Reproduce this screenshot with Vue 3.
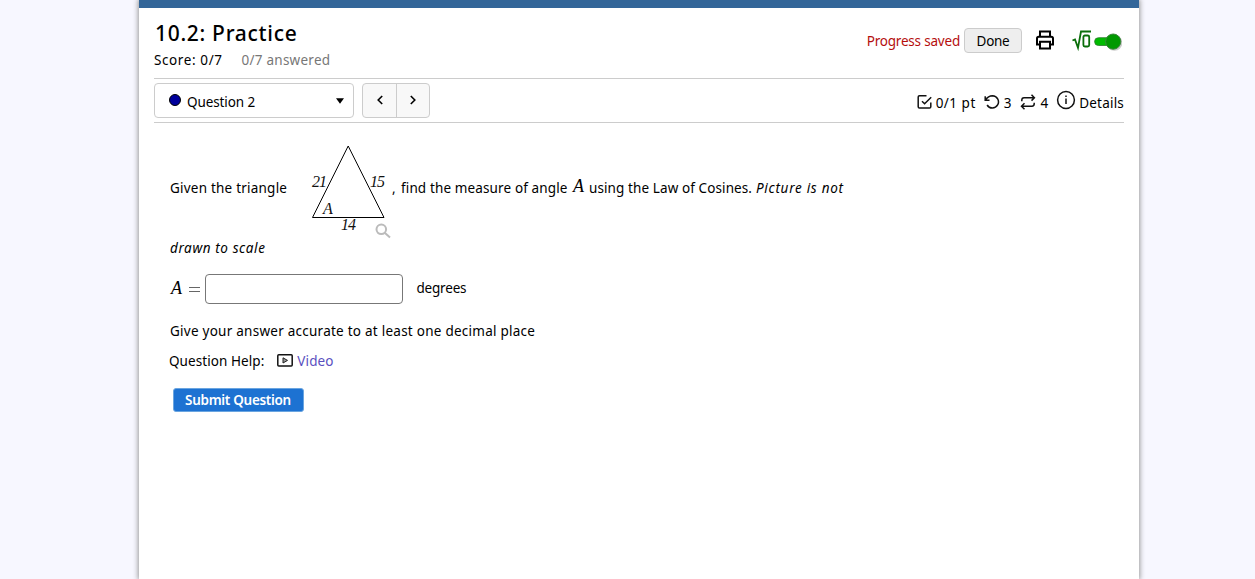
<template>
  <div class="page">
    <div class="container">
      <div class="topbar"></div>
      <header class="header">
        <div class="heading">
          <h1>10.2: Practice</h1>
          <div class="scores">
            <span class="score">Score: 0/7</span>
            <span class="answered">0/7 answered</span>
          </div>
        </div>
        <div class="tools">
          <span class="saved">Progress saved</span>
          <button class="done" type="button"><span>Done</span></button>
          <svg class="printer" width="20" height="20" viewBox="0 0 20 20">
            <path d="M5 6.5V1.5H15V6.5M5 14.5H2V8.5Q2 6.8 3.8 6.8H16.2Q18 6.8 18 8.5V14.5H15M5 11.8H15V18.5H5Z" />
          </svg>
          <button class="math-toggle" type="button" @click="mathOn = !mathOn">
            <svg width="50" height="24" viewBox="0 0 50 24">
              <path class="root" d="M0.5 11.5L3 10.5L6 18.8L9 2.5H19" />
              <rect class="root" x="11.4" y="6.5" width="5.8" height="11" rx="1.5" />
              <rect class="track" x="22.6" y="8.7" width="22" height="7.8" rx="3.9" />
              <circle class="shade" cx="42.4" cy="13.8" r="8" />
              <circle class="knob" :cx="mathOn ? 41.2 : 30" cy="12.6" r="7.6" />
            </svg>
          </button>
        </div>
      </header>

      <nav class="question-nav">
        <button class="picker" type="button">
          <i class="dot"></i>
          <span class="picker-label">Question 2</span>
          <svg width="8" height="6" viewBox="0 0 8 6"><path d="M0 0.3H8L4 5.7Z" /></svg>
        </button>
        <div class="arrows">
          <button type="button" aria-label="Previous">
            <svg width="8" height="10" viewBox="0 0 8 10"><path d="M6.2 1L2.2 5L6.2 9" /></svg>
          </button>
          <button type="button" aria-label="Next">
            <svg width="8" height="10" viewBox="0 0 8 10"><path d="M1.8 1L5.8 5L1.8 9" /></svg>
          </button>
        </div>
        <div class="details">
          <svg class="check" width="16" height="16" viewBox="0 0 16 16">
            <path d="M9.5 1.8H2.5Q1.2 1.8 1.2 3.1V12.8Q1.2 14.1 2.5 14.1H12.5Q13.8 14.1 13.8 12.8V8.5M5 7.3L7.6 9.8L14.2 3.2" />
          </svg>
          <span class="points">0/1 pt</span>
          <svg class="retry" width="16" height="16" viewBox="0 0 16 16">
            <path d="M1.2 2.2V6.3H5.5M1.5 6.1Q4.2 1.8 8.5 1.8A6.1 6.1 0 1 1 3.1 11" />
          </svg>
          <span class="tries">3</span>
          <svg class="repeat" width="16" height="16" viewBox="0 0 16 16">
            <path d="M11.5 0.8L14.4 3.8L11.5 6.6M14.2 3.8H4Q1.8 3.8 1.8 6.5V7.2M4.5 9.2L1.5 12.2L4.5 15.2M1.7 12.2H12Q14.2 12.2 14.2 9.8V8.8" />
          </svg>
          <span class="versions">4</span>
          <svg class="info" width="20" height="20" viewBox="0 0 20 20">
            <circle cx="10" cy="10" r="8.4" />
            <path d="M10 8.6V14M10 5.6V7" />
          </svg>
          <span class="details-label">Details</span>
        </div>
      </nav>

      <main class="question">
        <div class="prompt">
          <span class="given">Given the triangle</span>
          <div class="figure">
            <svg width="90" height="100" viewBox="0 0 90 100">
              <path class="triangle" d="M8.5 77.5H80L44.2 6Z" />
              <text x="8" y="47" textLength="15">21</text>
              <text x="66" y="47" textLength="15">15</text>
              <text x="19" y="74">A</text>
              <text x="37" y="90" textLength="15">14</text>
              <circle class="lens" cx="77.3" cy="89.3" r="4.8" />
              <path class="handle" d="M81 93L86 97.5" />
            </svg>
          </div>
          <span class="comma">,</span>
          <span class="find">find the measure of angle</span>
          <i class="var">A</i>
          <span class="using">using the Law of Cosines.</span>
          <em class="picture">Picture is not</em>
        </div>
        <div class="scale"><em>drawn to scale</em></div>
        <div class="answer">
          <i class="var">A</i>
          <span class="equals"></span>
          <input v-model="answer" type="text" aria-label="Answer" />
          <span class="degrees">degrees</span>
        </div>
        <p class="accuracy"><span>Give your answer accurate to at least one decimal place</span></p>
        <div class="help">
          <span class="help-label">Question Help:</span>
          <svg width="16" height="13" viewBox="0 0 16 13">
            <rect x="0.8" y="0.8" width="14.4" height="11.2" rx="1" />
            <path d="M6 3.8L10.5 6.4L6 9Z" />
          </svg>
          <a class="video">Video</a>
        </div>
        <button class="submit" type="button"><span>Submit Question</span></button>
      </main>
    </div>
  </div>
</template>

<script setup>
import { ref } from 'vue'

const answer = ref('')
const mathOn = ref(true)
</script>

<style>
body {
  margin: 0;
  background: #f7f7ff;
}
</style>

<style scoped>
.page {
  height: 100vh;
  overflow: hidden;
  background: #f7f7ff;
  color: #000;
  font-family: 'Trebuchet MS', 'Noto Sans', sans-serif;
  font-size: 13.5px;
  line-height: 20px;
  white-space: nowrap;
}

.container {
  box-sizing: border-box;
  width: 1000px;
  height: 100vh;
  margin-left: 139px;
  background: #fff;
  box-shadow: 0 0 5px 1px #999;
}

.topbar {
  height: 8px;
  background: #336699;
}

button {
  box-sizing: border-box;
  margin: 0;
  padding: 0;
  border: 0;
  background: none;
  color: inherit;
  font: inherit;
}

svg {
  display: block;
  flex: none;
  fill: none;
  stroke: #111;
  stroke-width: 1.5;
}

.header {
  display: flex;
  justify-content: space-between;
  box-sizing: border-box;
  height: 71px;
  margin: 0 15px;
  border-bottom: 1px solid #ccc;
}

h1 {
  margin: 11px 0 0 1px;
  font-size: 21px;
  font-weight: 500;
  line-height: 28px;
  letter-spacing: 0.7px;
}

.scores {
  display: flex;
  margin-top: 3px;
}

.score {
  width: 87.5px;
  letter-spacing: 0.6px;
}

.answered {
  color: #777;
  letter-spacing: 0.25px;
}

.tools {
  display: flex;
  align-items: center;
  height: 26px;
  margin-top: 20px;
}

.saved {
  margin-right: 4px;
  color: #b50d0d;
  letter-spacing: -0.2px;
}

.done {
  width: 58px;
  height: 25px;
  margin: 0 13px 1px 0;
  border: 1px solid #ccc;
  border-radius: 4px;
  background: #eee;
  letter-spacing: -0.3px;
}

.printer {
  margin-top: -2px;
  stroke: #000;
  stroke-width: 2;
}

.math-toggle {
  margin: 0 2px 0 17px;
}

.root {
  stroke: #0a6e0a;
  stroke-width: 1.8;
}

.track {
  fill: #0b0;
  stroke: #2a7a2a;
  stroke-width: 0.8;
}

.shade {
  fill: rgba(0, 0, 0, 0.2);
  stroke: none;
}

.knob {
  fill: #090;
  stroke: #3b863b;
  stroke-width: 1;
}

.question-nav {
  display: flex;
  align-items: center;
  box-sizing: border-box;
  height: 44px;
  margin: 0 15px;
  border-bottom: 1px solid #ccc;
}

.picker {
  display: flex;
  align-items: center;
  width: 200px;
  height: 35px;
  padding: 0 9px 0 14px;
  border: 1px solid #ccc;
  border-radius: 4px;
}

.picker-label {
  margin-top: 2px;
  letter-spacing: -0.1px;
}

.dot {
  box-sizing: border-box;
  width: 12px;
  height: 12px;
  margin: -2px 6px 0 0;
  border: 1px solid #000;
  border-radius: 50%;
  background: #00009c;
}

.picker svg {
  margin-left: auto;
  fill: #000;
  stroke: none;
}

.arrows {
  display: flex;
  box-sizing: border-box;
  width: 68px;
  height: 35px;
  margin-left: 8px;
  border: 1px solid #ccc;
  border-radius: 4px;
  background: #f8f8f8;
}

.arrows button {
  display: flex;
  align-items: center;
  justify-content: center;
  width: 33px;
}

.arrows button + button {
  border-left: 1px solid #ccc;
}

.arrows svg {
  margin-top: -1px;
  stroke: #000;
  stroke-width: 1.6;
}

.details {
  display: flex;
  align-items: center;
  margin: 4px 0 0 auto;
}

.check {
  margin: -2px 3px 0 0;
}

.points {
  letter-spacing: 0.5px;
}

.details .retry {
  margin: -2px 4px 0 8px;
}

.details .repeat {
  margin: -2px 5px 0 8px;
}

.details .info {
  margin: -6px 3px 0 8px;
}

.details-label {
  letter-spacing: 0.2px;
}

.question {
  padding: 0 31px;
}

.prompt {
  display: flex;
  height: 100px;
  padding-top: 17px;
}

.prompt > span,
.prompt > em {
  margin-top: 38px;
}

.given {
  width: 117px;
  letter-spacing: 0.22px;
}

.figure {
  margin-left: 17px;
}

.figure text {
  fill: #111;
  stroke: none;
  font: italic 16px 'Liberation Serif', serif;
}

.triangle {
  stroke: #000;
  stroke-width: 1;
}

.lens,
.handle {
  stroke: #bbb;
  stroke-width: 2;
}

.comma {
  width: 9px;
  margin-left: -2px;
}

.find {
  width: 166px;
  letter-spacing: 0.13px;
}

.var {
  font: italic 18px/20px 'Liberation Serif', serif;
}

.prompt .var {
  width: 11px;
  margin: 36px 5px 0 6px;
}

.using {
  width: 162px;
  letter-spacing: 0.1px;
}

.picture {
  margin-left: 5px;
  letter-spacing: 0.72px;
}

.scale {
  margin-top: -2px;
  letter-spacing: 0.6px;
}

.answer {
  display: flex;
  align-items: center;
  height: 30px;
  margin-top: 16px;
}

.answer .var {
  margin: -2px 0 0 1px;
}

.equals {
  width: 11px;
  height: 3px;
  margin: 0 5px 0 7px;
  border: solid #666;
  border-width: 1px 0;
}

input {
  box-sizing: border-box;
  width: 198px;
  height: 30px;
  margin: 0 13.5px 0 0;
  border: 1px solid #777;
  border-radius: 4px;
  outline: none;
}

.degrees {
  margin-top: -2px;
  letter-spacing: -0.2px;
}

.accuracy {
  margin: 17px 0 0;
  letter-spacing: 0.25px;
}

.help {
  display: flex;
  align-items: center;
  margin: 10px 0 0 -1px;
}

.help-label {
  letter-spacing: 0.07px;
}

.help svg {
  margin: -2px 4px 0 13px;
}

.help path {
  fill: #999;
  stroke: #222;
  stroke-width: 1;
}

.video {
  color: #5a4fc0;
  letter-spacing: 0.1px;
}

.submit {
  width: 131px;
  height: 24px;
  margin: 16.5px 0 0 2.5px;
  border: 1px solid #6aa5e0;
  border-radius: 3px;
  background: #1d72d2;
  color: #fff;
  font-weight: 600;
  letter-spacing: -0.3px;
}
</style>
